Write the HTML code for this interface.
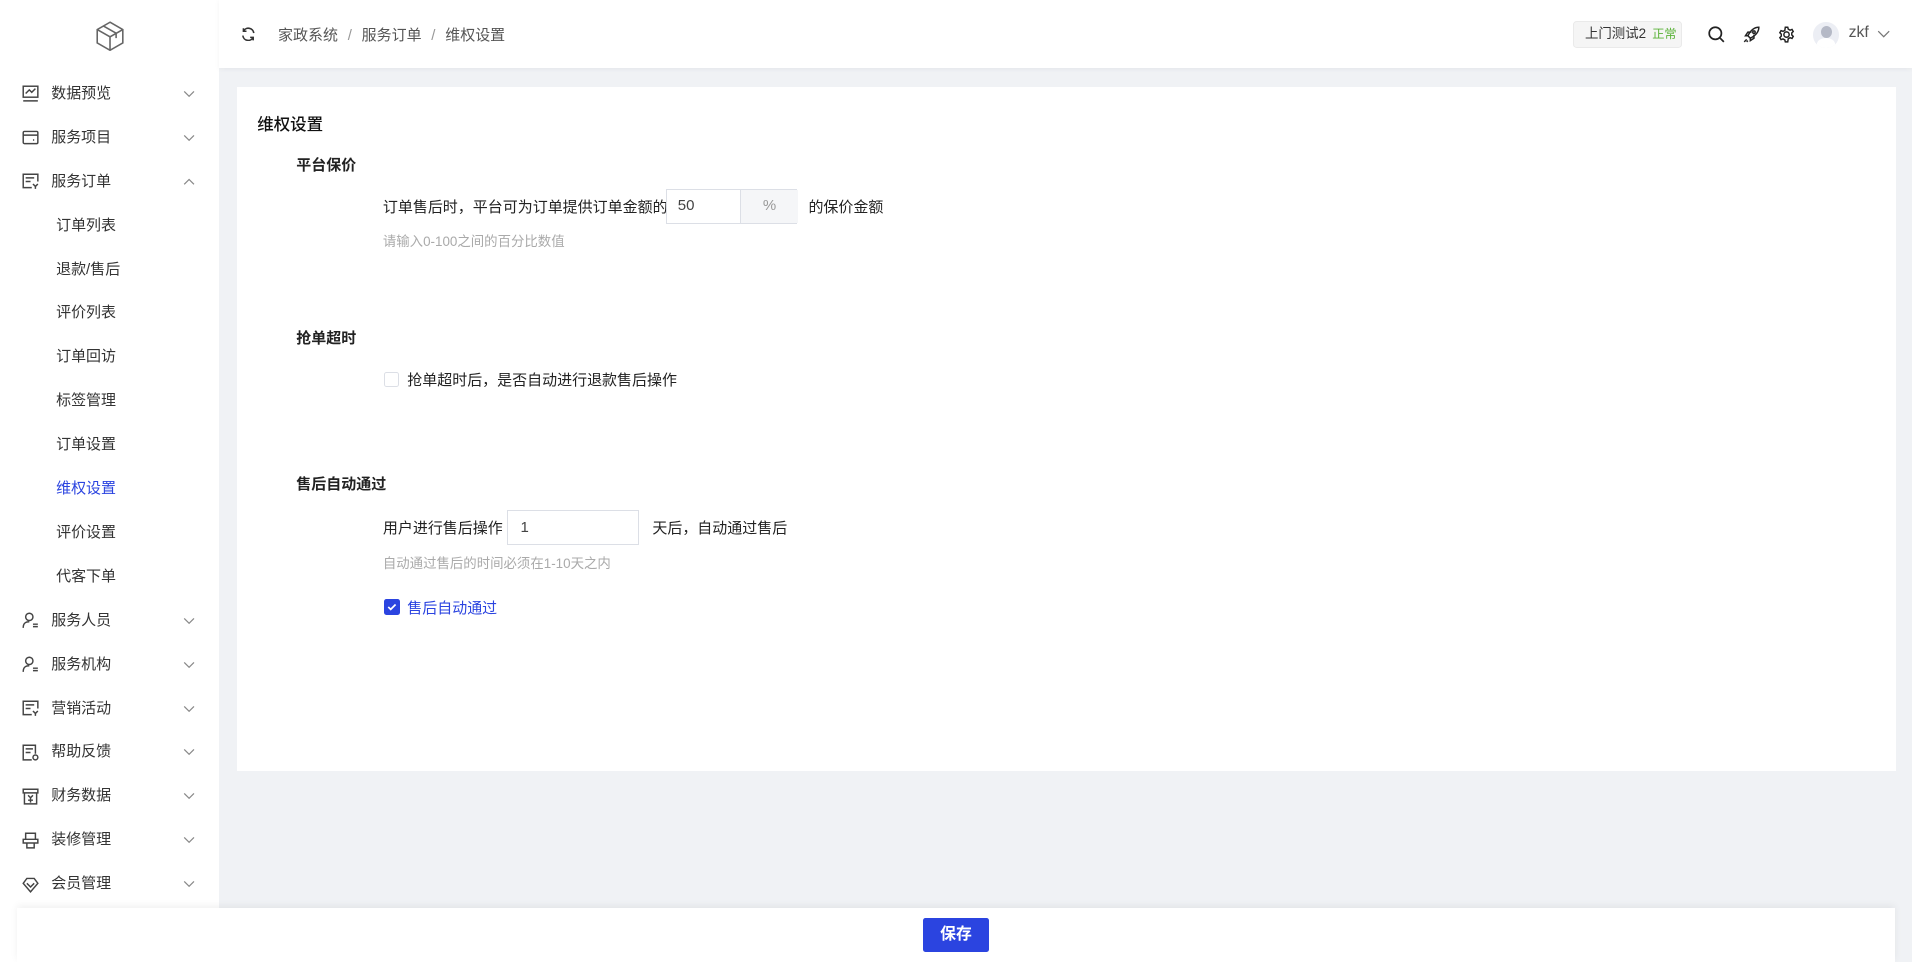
<!DOCTYPE html>
<html><head><meta charset="utf-8"><style>
html,body{margin:0;padding:0;width:1912px;height:962px;overflow:hidden;background:#f0f2f5}
#r{zoom:1.21939;width:1568px;height:789px;position:relative;font-family:"Liberation Sans","Noto Sans CJK SC",sans-serif;color:#333;font-size:12.3px}
.abs{position:absolute}
#side{left:0;top:0;width:180px;height:789px;background:#fff}
.mi{position:absolute;left:0;width:180px;height:36px;line-height:36px}
.mi .t{position:absolute;left:42px;font-size:12.3px;color:#333}
.mi .s{position:absolute;left:46px;font-size:12.3px;color:#333}
.mi svg.ic{position:absolute;left:18px;top:11px}
.mi svg.ch{position:absolute;left:150px;top:14px}
#hdr{left:180px;top:0;width:1388px;height:56px;background:#fff;box-shadow:0 1px 4px rgba(0,0,0,.05)}
#card{left:194px;top:71px;width:1361px;height:561px;background:#fff}
.b{font-weight:bold;color:#222}
.inp{border:1px solid #dcdfe6;box-sizing:border-box;background:#fff}
.hint{color:#aaa;font-size:11px}
#foot{left:14px;top:745px;width:1540px;height:44px;background:#fff;box-shadow:0 -2px 6px rgba(0,0,0,.06)}
</style></head><body><div id="r">
<div id="side" class="abs">
<svg class="abs" style="left:79px;top:17px" width="23" height="25" viewBox="0 0 23 25" fill="none" stroke="#666" stroke-width="1.3"><path d="M11.5 1L22 7v11l-10.5 6L1 18V7z M1 7l10.5 6L22 7 M11.5 13v11 M6 4l10.5 6v4"/></svg>
<div class="mi" style="top:59px"><svg class="ic" width="14" height="14" viewBox="0 0 14 14" fill="none" stroke="#444" stroke-width="1.2"><rect x="1" y="1" width="12" height="9"/><path d="M1 13h12M3 7l3-3 2 2 3-3"/></svg><span class="t">数据预览</span><svg class="ch" width="10" height="8" viewBox="0 0 10 8" fill="none" stroke="#888"><path d="M1 2l4 4 4-4"/></svg></div>
<div class="mi" style="top:95px"><svg class="ic" width="14" height="14" viewBox="0 0 14 14" fill="none" stroke="#444" stroke-width="1.2"><rect x="1" y="2" width="12" height="10" rx="1"/><path d="M1 5h12M9 9h1"/></svg><span class="t">服务项目</span><svg class="ch" width="10" height="8" viewBox="0 0 10 8" fill="none" stroke="#888"><path d="M1 2l4 4 4-4"/></svg></div>
<div class="mi" style="top:131px"><svg class="ic" width="14" height="14" viewBox="0 0 14 14" fill="none" stroke="#444" stroke-width="1.2"><path d="M8 12H1V1h12v6M3 4h7M3 7h4M9 9l2 2 2-2M11 11v2"/></svg><span class="t">服务订单</span><svg class="ch" width="10" height="8" viewBox="0 0 10 8" fill="none" stroke="#888"><path d="M1 6l4-4 4 4"/></svg></div>
<div class="mi" style="top:167px"><span class="s">订单列表</span></div>
<div class="mi" style="top:203px"><span class="s">退款/售后</span></div>
<div class="mi" style="top:239px"><span class="s">评价列表</span></div>
<div class="mi" style="top:275px"><span class="s">订单回访</span></div>
<div class="mi" style="top:311px"><span class="s">标签管理</span></div>
<div class="mi" style="top:347px"><span class="s">订单设置</span></div>
<div class="mi" style="top:383px"><span class="s" style="color:#2b44e0">维权设置</span></div>
<div class="mi" style="top:419px"><span class="s">评价设置</span></div>
<div class="mi" style="top:455px"><span class="s">代客下单</span></div>
<div class="mi" style="top:491px"><svg class="ic" width="14" height="14" viewBox="0 0 14 14" fill="none" stroke="#444" stroke-width="1.2"><circle cx="6" cy="4" r="3"/><path d="M1 13c0-4 2-5 5-5M9 10h4M9 12h4"/></svg><span class="t">服务人员</span><svg class="ch" width="10" height="8" viewBox="0 0 10 8" fill="none" stroke="#888"><path d="M1 2l4 4 4-4"/></svg></div>
<div class="mi" style="top:527px"><svg class="ic" width="14" height="14" viewBox="0 0 14 14" fill="none" stroke="#444" stroke-width="1.2"><circle cx="6" cy="4" r="3"/><path d="M1 13c0-4 2-5 5-5M9 10h4M9 12h4"/></svg><span class="t">服务机构</span><svg class="ch" width="10" height="8" viewBox="0 0 10 8" fill="none" stroke="#888"><path d="M1 2l4 4 4-4"/></svg></div>
<div class="mi" style="top:563px"><svg class="ic" width="14" height="14" viewBox="0 0 14 14" fill="none" stroke="#444" stroke-width="1.2"><path d="M8 12H1V1h12v6M3 4h7M3 7h4M9 9l2 2 2-2M11 11v2"/></svg><span class="t">营销活动</span><svg class="ch" width="10" height="8" viewBox="0 0 10 8" fill="none" stroke="#888"><path d="M1 2l4 4 4-4"/></svg></div>
<div class="mi" style="top:599px"><svg class="ic" width="14" height="14" viewBox="0 0 14 14" fill="none" stroke="#444" stroke-width="1.2"><path d="M8 13H1V1h10v7M3 4h6M3 7h4"/><circle cx="11" cy="11" r="2"/></svg><span class="t">帮助反馈</span><svg class="ch" width="10" height="8" viewBox="0 0 10 8" fill="none" stroke="#888"><path d="M1 2l4 4 4-4"/></svg></div>
<div class="mi" style="top:635px"><svg class="ic" width="14" height="14" viewBox="0 0 14 14" fill="none" stroke="#444" stroke-width="1.2"><path d="M1 1h12v3H1zM2 4v9h10V4M5 6l2 2 2-2M7 8v4M5 10h4"/></svg><span class="t">财务数据</span><svg class="ch" width="10" height="8" viewBox="0 0 10 8" fill="none" stroke="#888"><path d="M1 2l4 4 4-4"/></svg></div>
<div class="mi" style="top:671px"><svg class="ic" width="14" height="14" viewBox="0 0 14 14" fill="none" stroke="#444" stroke-width="1.2"><path d="M3 1h8v5H3zM1 6h12v3H1zM4 9v4h6V9"/></svg><span class="t">装修管理</span><svg class="ch" width="10" height="8" viewBox="0 0 10 8" fill="none" stroke="#888"><path d="M1 2l4 4 4-4"/></svg></div>
<div class="mi" style="top:707px"><svg class="ic" width="14" height="14" viewBox="0 0 14 14" fill="none" stroke="#444" stroke-width="1.2"><path d="M4 2h6l3 4-6 7-6-7zM4 6l3 3 3-3"/></svg><span class="t">会员管理</span><svg class="ch" width="10" height="8" viewBox="0 0 10 8" fill="none" stroke="#888"><path d="M1 2l4 4 4-4"/></svg></div>
</div>
<div id="hdr" class="abs">
<svg class="abs" style="left:18px;top:22px" width="12" height="12" viewBox="0 0 12 12" fill="none" stroke="#333" stroke-width="1.3"><path d="M10.5 5A4.5 4.5 0 0 0 2 3.5M1.5 7A4.5 4.5 0 0 0 10 8.5M2 1v2.5h2.5M10 11V8.5H7.5"/></svg>
<div class="abs" style="left:48px;top:20px;font-size:12.3px;color:#555">家政系统<span style="color:#999;margin:0 8px">/</span>服务订单<span style="color:#999;margin:0 8px">/</span>维权设置</div>
<div class="abs" style="left:1110px;top:17px;width:89px;height:22px;background:#f5f5f5;border:1px solid #eaeaea;border-radius:3px;box-sizing:border-box;font-size:11px;line-height:20px;padding-left:9px;color:#333">上门测试2 <span style="color:#5ab238;font-size:10px;margin-left:2px">正常</span></div>
<svg class="abs" style="left:1221px;top:21px" width="14" height="14" viewBox="0 0 14 14" fill="none" stroke="#222" stroke-width="1.4"><circle cx="6" cy="6" r="5"/><path d="M10 10l3 3"/></svg>
<svg class="abs" style="left:1249px;top:21px" width="14" height="14" viewBox="0 0 14 14" fill="none" stroke="#222" stroke-width="1.2"><path d="M13 1C9 1 6 4 4 8l2 2c4-2 7-5 7-9zM4 8H2l2-3h3M6 10v2l3-2V7M3 11l-2 2M4 12l-1 1"/><circle cx="9" cy="5" r="1"/></svg>
<svg class="abs" style="left:1278px;top:21px" width="14" height="14" viewBox="0 0 14 14" fill="none" stroke="#222" stroke-width="1.2"><circle cx="7" cy="7" r="2.2"/><path d="M6 1h2l.4 1.6 1.5.8 1.6-.6 1 1.7-1.2 1.2v1.6l1.2 1.2-1 1.7-1.6-.6-1.5.8L8 13H6l-.4-1.6-1.5-.8-1.6.6-1-1.7 1.2-1.2V6.7L1.5 5.5l1-1.7 1.6.6 1.5-.8z"/></svg>
<div class="abs" style="left:1307px;top:18px;width:21px;height:21px;border-radius:50%;background:#eceef4;overflow:hidden"><div style="position:absolute;left:6px;top:3px;width:9px;height:10px;border-radius:50%;background:#b5b9c6"></div><div style="position:absolute;left:3px;top:13px;width:15px;height:10px;border-radius:50%;background:#fff"></div></div>
<div class="abs" style="left:1336px;top:20px;font-size:13px;color:#555">zkf</div>
<svg class="abs" style="left:1359px;top:25px" width="11" height="7" viewBox="0 0 11 7" fill="none" stroke="#777"><path d="M1 1l4.5 4.5L10 1"/></svg>
</div>
<div id="card" class="abs">
<div class="abs" style="left:17px;top:20px;font-size:13.5px;color:#111;font-weight:500">维权设置</div>
<div class="abs b" style="left:49px;top:55px">平台保价</div>
<div class="abs" style="left:120px;top:90px;color:#222">订单售后时，平台可为订单提供订单金额的</div>
<div class="abs inp" style="left:352px;top:84px;width:108px;height:29px"><span class="abs" style="left:9px;top:6px;color:#444">50</span><div class="abs" style="left:60px;top:0;width:47px;height:27px;background:#f5f6f8;border-left:1px solid #dcdfe6;text-align:center;line-height:27px;color:#999">%</div></div>
<div class="abs" style="left:469px;top:90px;color:#222">的保价金额</div>
<div class="abs hint" style="left:120px;top:118px">请输入0-100之间的百分比数值</div>
<div class="abs b" style="left:49px;top:197px">抢单超时</div>
<div class="abs" style="left:121px;top:234px;width:12px;height:12px;border:1px solid #dcdfe6;border-radius:2px;box-sizing:border-box"></div>
<div class="abs" style="left:140px;top:232px;color:#222">抢单超时后，是否自动进行退款售后操作</div>
<div class="abs b" style="left:49px;top:317px">售后自动通过</div>
<div class="abs" style="left:120px;top:353px;color:#222">用户进行售后操作</div>
<div class="abs inp" style="left:222px;top:347px;width:108px;height:29px"><span class="abs" style="left:10px;top:7px;color:#444">1</span></div>
<div class="abs" style="left:341px;top:353px;color:#222">天后，自动通过售后</div>
<div class="abs hint" style="left:120px;top:382px">自动通过售后的时间必须在1-10天之内</div>
<div class="abs" style="left:121px;top:420px;width:13px;height:13px;background:#2b44e0;border-radius:2px"><svg width="13" height="13" viewBox="0 0 13 13" fill="none" stroke="#fff" stroke-width="1.4" style="position:absolute;left:0;top:0"><path d="M3.5 6.5l2 2 4-4"/></svg></div>
<div class="abs" style="left:140px;top:419px;color:#2b44e0">售后自动通过</div>
</div>
<div id="foot" class="abs"><div class="abs" style="left:743px;top:8px;width:54px;height:28px;background:#2b44e0;border-radius:2px;color:#fff;font-weight:bold;text-align:center;line-height:28px;font-size:13px">保存</div></div>
</div></body></html>
